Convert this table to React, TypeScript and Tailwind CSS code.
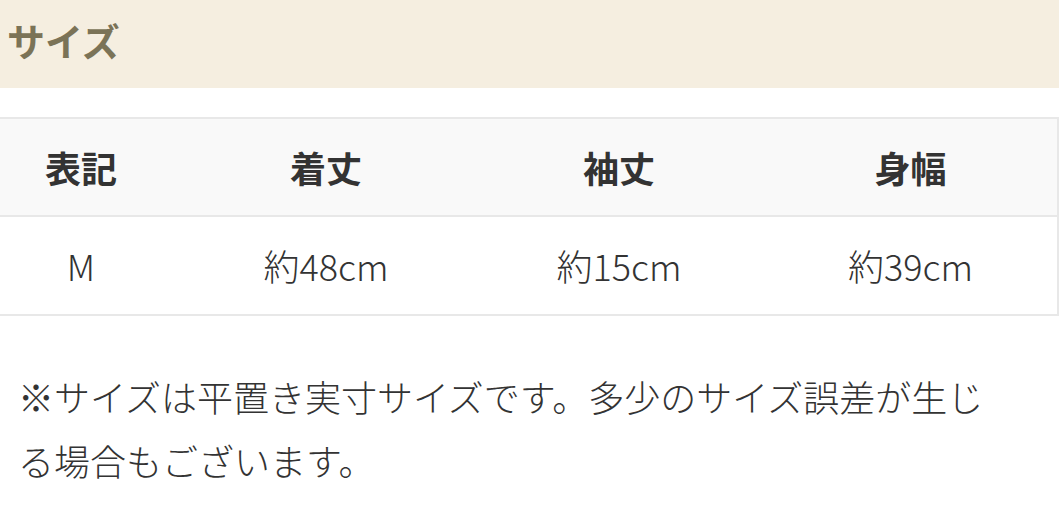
import React from "react";

export default function App() {
  const font = { fontFamily: '"Noto Sans CJK JP", "Noto Sans", sans-serif' };
  return (
    <div className="w-[1059px] h-[509px] bg-white overflow-hidden" style={font}>
      <div className="h-[88px] bg-[#f5eee0] flex items-center pl-[7px] pb-[8px]">
        <h2 className="text-[38px] font-bold text-[#7b7357] leading-none">サイズ</h2>
      </div>
      <div className="h-[29px]" />
      <table className="w-[1058px] border-collapse table-fixed text-[#333] text-[36px]">
        <colgroup>
          <col className="w-[162px]" />
          <col className="w-[328px]" />
          <col className="w-[258px]" />
          <col className="w-[310px]" />
        </colgroup>
        <thead>
          <tr className="h-[98px] bg-[#f9f9f9]">
            <th className="border-y-2 border-[#e8e8e8] font-bold text-center">表記</th>
            <th className="border-y-2 border-[#e8e8e8] font-bold text-center">着丈</th>
            <th className="border-y-2 border-[#e8e8e8] font-bold text-center">袖丈</th>
            <th className="border-y-2 border-r-2 border-[#e8e8e8] font-bold text-center pl-[16px]">身幅</th>
          </tr>
        </thead>
        <tbody>
          <tr className="h-[99px] font-light">
            <td className="border-b-2 border-[#e8e8e8] text-center pb-[2px]">M</td>
            <td className="border-b-2 border-[#e8e8e8] text-center pb-[2px]">約48cm</td>
            <td className="border-b-2 border-[#e8e8e8] text-center pb-[2px]">約15cm</td>
            <td className="border-b-2 border-r-2 border-[#e8e8e8] text-center pl-[16px] pb-[2px]">約39cm</td>
          </tr>
        </tbody>
      </table>
      <p className="pl-[18px] pr-[60px] mt-[48px] text-[36px] leading-[64px] text-[#333] font-light">
        ※サイズは平置き実寸サイズです。多少のサイズ誤差が生じる場合もございます。
      </p>
    </div>
  );
}
